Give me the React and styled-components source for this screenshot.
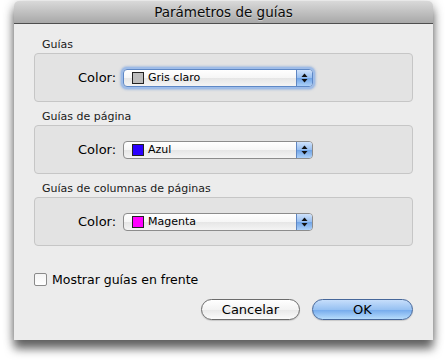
import React from 'react'
import styled, { createGlobalStyle, css } from 'styled-components'

const GlobalStyle = createGlobalStyle`
  html, body {
    margin: 0;
    padding: 0;
    background: #ffffff;
  }
  body {
    font-family: "DejaVu Sans", "Noto Sans", sans-serif;
    color: #000;
  }
`

const groups = [
  { title: 'Guías', color: '#bdbdbd', name: 'Gris claro', focused: true },
  { title: 'Guías de página', color: '#2a00ff', name: 'Azul' },
  { title: 'Guías de columnas de páginas', color: '#ff00ff', name: 'Magenta' },
]

const App = () => {
  return (
    <>
      <GlobalStyle />
      <Page>
        <Window>
          <TitleBar>Parámetros de guías</TitleBar>
          <Body>
            {groups.map((g) => (
              <Group key={g.title}>
                <GroupLabel>{g.title}</GroupLabel>
                <GroupBox>
                  <FieldLabel>Color:</FieldLabel>
                  <Popup $focused={g.focused}>
                    <Swatch $color={g.color} />
                    <PopupText>{g.name}</PopupText>
                    <Stepper>
                      <svg width="7" height="10" viewBox="0 0 7 10">
                        <path d="M3.5 0.5 L6.5 4 L0.5 4 Z" fill="#111" />
                        <path d="M3.5 9.5 L6.5 6 L0.5 6 Z" fill="#111" />
                      </svg>
                    </Stepper>
                  </Popup>
                </GroupBox>
              </Group>
            ))}
            <CheckRow>
              <CheckBox />
              <CheckText>Mostrar guías en frente</CheckText>
            </CheckRow>
            <ButtonRow>
              <PushButton>Cancelar</PushButton>
              <PushButton $primary>OK</PushButton>
            </ButtonRow>
          </Body>
        </Window>
      </Page>
    </>
  )
}

const Page = styled.div`
  width: 447px;
  height: 361px;
  padding: 1px 0 0 14px;
  box-sizing: border-box;
  overflow: hidden;
`

const Window = styled.div`
  width: 419px;
  display: flex;
  flex-direction: column;
  background: #ececec;
  border-radius: 5px 5px 0 0;
  box-shadow: 0 9px 10px rgba(0, 0, 0, 0.55), 0 2px 12px rgba(0, 0, 0, 0.25);
`

const TitleBar = styled.div`
  height: 22px;
  display: flex;
  align-items: center;
  justify-content: center;
  font-size: 13.5px;
  color: #0a0a0a;
  border-radius: 5px 5px 0 0;
  background: linear-gradient(#d9d9d9, #a8a8a8);
  border-bottom: 1px solid #4e4e4e;
  text-shadow: 0 1px 0 rgba(255, 255, 255, 0.4);
`

const Body = styled.div`
  display: flex;
  flex-direction: column;
  padding: 14px 20px 20px 20px;
`

const Group = styled.div`
  display: flex;
  flex-direction: column;
  & + & {
    margin-top: 8px;
  }
`

const GroupLabel = styled.div`
  font-size: 11px;
  line-height: 14px;
  height: 14px;
  padding-left: 8px;
  color: #1a1a1a;
`

const GroupBox = styled.div`
  height: 47px;
  margin-top: 1px;
  display: flex;
  align-items: center;
  padding-left: 43px;
  background: #e3e3e3;
  border: 1px solid #c6c6c6;
  border-radius: 4px;
`

const FieldLabel = styled.span`
  font-size: 13px;
  width: 44px;
  margin-right: 1px;
`

const Popup = styled.div`
  position: relative;
  width: 190px;
  height: 18px;
  box-sizing: border-box;
  display: flex;
  align-items: center;
  padding-left: 8px;
  border: 1px solid #8c8c8c;
  border-radius: 4px;
  background: linear-gradient(#ffffff, #f6f6f6 50%, #e6e6e6 51%, #f4f4f4);
  overflow: hidden;
  ${({ $focused }) =>
    $focused &&
    css`
      border-color: #5e88c6;
      box-shadow: 0 0 0 2px #9ebce8, 0 0 2px 3px rgba(120, 160, 220, 0.5);
    `}
`

const Swatch = styled.span`
  width: 12px;
  height: 12px;
  box-sizing: border-box;
  border: 1px solid #222;
  background: ${({ $color }) => $color};
`

const PopupText = styled.span`
  margin-left: 4px;
  font-size: 11px;
  flex: 1;
`

const Stepper = styled.span`
  width: 15px;
  align-self: stretch;
  display: flex;
  align-items: center;
  justify-content: center;
  border-left: 1px solid #5f86c2;
  background: linear-gradient(#cfe2fb, #96bef0 50%, #6fa3e6 51%, #acd0f8);
`

const CheckRow = styled.div`
  display: flex;
  align-items: center;
  margin-top: 26px;
  height: 15px;
`

const CheckBox = styled.span`
  width: 13px;
  height: 13px;
  box-sizing: border-box;
  border: 1px solid #8a8a8a;
  border-radius: 2px;
  background: linear-gradient(#f4f4f4, #ffffff);
`

const CheckText = styled.span`
  margin-left: 5px;
  font-size: 12.5px;
`

const ButtonRow = styled.div`
  display: flex;
  justify-content: flex-end;
  gap: 12px;
  margin-top: 12px;
`

const PushButton = styled.button`
  width: ${({ $primary }) => ($primary ? '101px' : '99px')};
  height: 21px;
  padding: 0;
  font-family: "DejaVu Sans", "Noto Sans", sans-serif;
  font-size: 13px;
  color: #000;
  border: 1px solid #6b6b6b;
  border-radius: 11px;
  background: ${({ $primary }) =>
    $primary
      ? 'linear-gradient(#c6defb, #97c1f2 50%, #73a9ec 51%, #b7dcfc)'
      : 'linear-gradient(#ffffff, #f3f3f3 50%, #e8e8e8 51%, #fbfbfb)'};
  border-color: ${({ $primary }) => ($primary ? '#46679a' : '#6b6b6b')};
  box-shadow: 0 1px 1px rgba(0, 0, 0, 0.15);
`

export default App
